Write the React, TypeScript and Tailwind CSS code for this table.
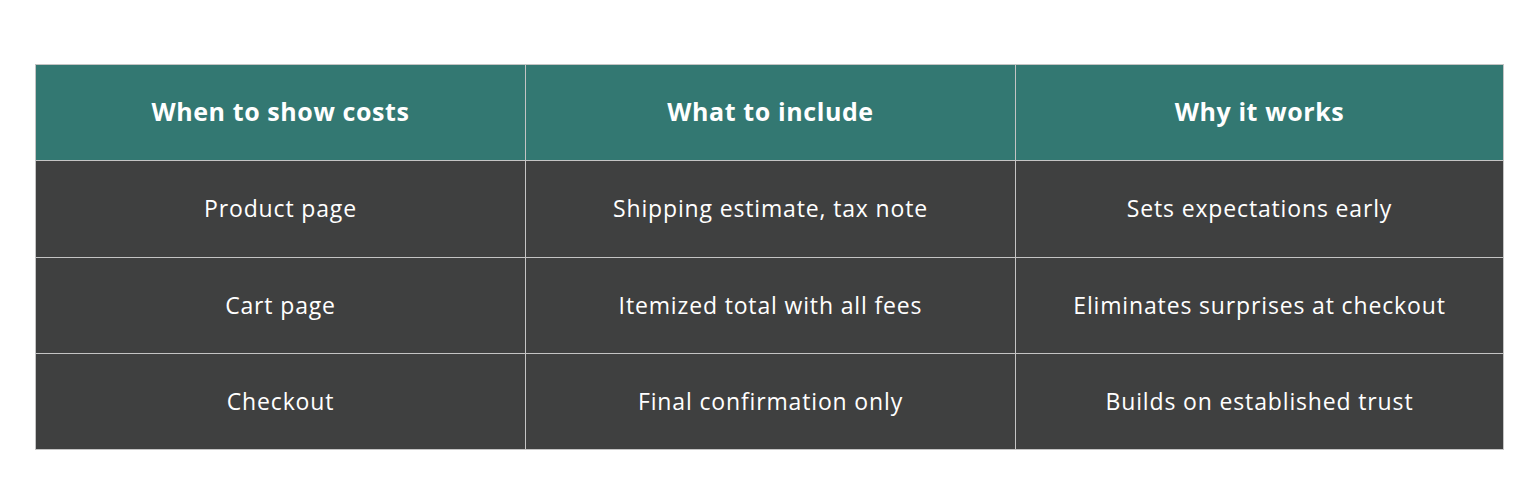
import React from "react";

const header = ["When to show costs", "What to include", "Why it works"];
const rows = [
  ["Product page", "Shipping estimate, tax note", "Sets expectations early"],
  ["Cart page", "Itemized total with all fees", "Eliminates surprises at checkout"],
  ["Checkout", "Final confirmation only", "Builds on established trust"],
];
const heights = ["h-[96px]", "h-[95px]", "h-[95px]"];

export default function App() {
  return (
    <div className="w-[1540px] h-[500px] bg-white pt-[64px] pl-[35px]" style={{ fontFamily: '"Open Sans", "Noto Sans", sans-serif' }}>
      <div className="w-[1469px] grid grid-cols-[489px_489px_1fr] gap-px p-px bg-[#c4c4c4]">
        {header.map((h) => (
          <div key={h} className="h-[95px] bg-[#337872] flex items-center justify-center text-white font-bold text-[25px] tracking-[0.6px] pb-[1px]">
            {h}
          </div>
        ))}
        {rows.map((r, ri) =>
          r.map((c, i) => (
            <div key={ri + "-" + i} className={`${heights[ri]} bg-[#3f4040] flex items-center justify-center text-white text-[23px] tracking-[0.85px] pb-[1px]`}>
              {c}
            </div>
          ))
        )}
      </div>
    </div>
  );
}
